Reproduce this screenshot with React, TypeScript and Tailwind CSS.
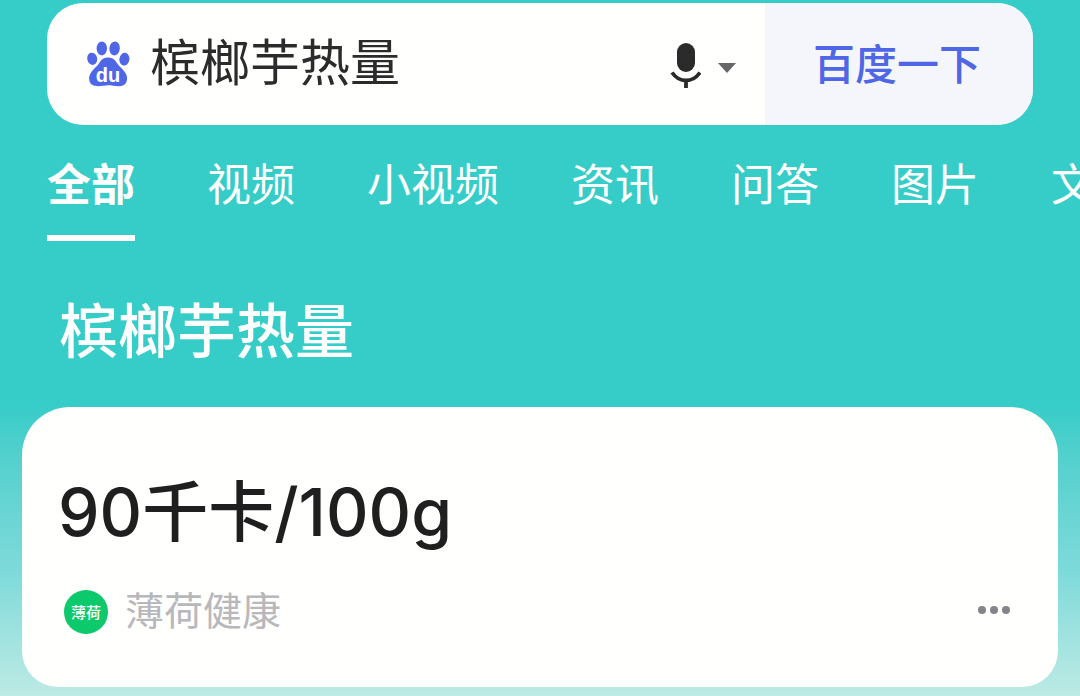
import { useState } from 'react';

const TABS = ['全部', '视频', '小视频', '资讯', '问答', '图片', '文库'];

const PawLogo = () => (
  <svg viewBox="0 0 44 46" className="w-11 h-[46px] shrink-0" role="img" aria-label="百度">
    <g fill="#4f67e6">
      <ellipse cx="6.200" cy="17.800" rx="5" ry="6.200" transform="rotate(-12 6.200 17.800)" />
      <ellipse cx="15.800" cy="7.400" rx="5.200" ry="7" />
      <ellipse cx="28.600" cy="7.400" rx="5.200" ry="7" transform="rotate(6 28.600 7.400)" />
      <ellipse cx="38.400" cy="18.200" rx="5" ry="6.400" transform="rotate(8 38.400 18.200)" />
      <path d="M22 16.500c4 0 6.600 1.800 8.600 5 2.200 3.500 5 5.500 7.800 9 2.600 3.200 3.400 6.500 2.200 10-1.200 3.600-4.400 4.900-8.400 4.700-3.500-.2-6.700-.9-10.200-.9s-6.500.9-10 .9c-4 0-7.400-1.300-8.500-4.900-1-3.500-.1-6.700 2.300-9.800 2.800-3.500 5.600-5.500 7.800-9 2-3.200 4.400-5 8.400-5z" />
    </g>
    <text
      x="22"
      y="41"
      textAnchor="middle"
      fill="#ffffff"
      className="font-['Liberation_Sans',sans-serif] text-[20px] font-bold"
    >
      du
    </text>
  </svg>
);

const MicIcon = () => (
  <svg viewBox="0 0 32 46" className="w-8 h-[46px]" aria-hidden="true">
    <rect x="8" y="1" width="18" height="29" rx="9" fill="#2b2b2b" />
    <path d="M3 30.500C6.500 35.500 11 38.500 17 38.500S27.500 35.500 31 30.500M17 38.500V46" fill="none" stroke="#2b2b2b" strokeWidth="3.800" />
  </svg>
);

const SearchBar = () => {
  const [query, setQuery] = useState('槟榔芋热量');

  return (
    <form
      onSubmit={(e) => e.preventDefault()}
      className="mx-[47px] flex h-[122px] overflow-hidden rounded-[36px] bg-[#fffffd]"
    >
      <div className="flex min-w-0 flex-1 items-center pl-[39px] pr-7">
        <PawLogo />
        <input
          type="text"
          aria-label="搜索"
          value={query}
          onChange={(e) => setQuery(e.target.value)}
          className="ml-5 h-[72px] min-w-0 flex-1 bg-transparent text-[50px] leading-[72px] text-[#2b2b2b] outline-none"
        />
        <button type="button" aria-label="语音搜索" className="pt-0.5">
          <MicIcon />
        </button>
        <button type="button" aria-label="更多搜索方式" className="ml-4 pt-2">
          <svg viewBox="0 0 20 10" className="h-[10px] w-5" aria-hidden="true">
            <path d="M1 0h18l-9 10z" fill="#666666" />
          </svg>
        </button>
      </div>
      <button type="submit" className="w-[268px] bg-[#f5f6fb] pt-0.5 pr-1 text-[42px] font-medium text-[#4f67e6]">
        百度一下
      </button>
    </form>
  );
};

const TabBar = () => {
  const [active, setActive] = useState(TABS[0]);

  return (
    <nav className="mt-7 flex gap-[72px] overflow-hidden pl-[47px]">
      {TABS.map((tab) => (
        <button
          key={tab}
          type="button"
          onClick={() => setActive(tab)}
          className={`shrink-0 border-b-6 pb-4 text-[44px] leading-[66px] text-white ${
            active === tab ? 'border-white font-bold' : 'border-transparent font-normal'
          }`}
        >
          {tab}
        </button>
      ))}
    </nav>
  );
};

const AnswerCard = () => (
  <section className="mx-[22px] mt-8 rounded-t-[48px] rounded-b-[36px] bg-[#fffffe] px-9 pt-[60px] pb-[52px]">
    <p className="font-[Inter,'Noto_Sans_CJK_SC',sans-serif] text-[66px] leading-[90px] font-medium text-[#1f1f1f]">
      90千卡/100g
    </p>
    <div className="mt-8 flex items-center justify-between pr-3">
      <a href="#source" className="flex items-center gap-[17px] pl-1.5">
        <span className="flex size-11 items-center justify-center rounded-full bg-[#0cc96b] text-[15px] leading-none font-medium text-white">
          薄荷
        </span>
        <span className="text-[39px] leading-[46px] text-[#b8b8bc]">薄荷健康</span>
      </a>
      <button type="button" aria-label="更多" className="flex gap-1 pb-1">
        <span className="size-2 rounded-full bg-[#858589]" />
        <span className="size-2 rounded-full bg-[#858589]" />
        <span className="size-2 rounded-full bg-[#858589]" />
      </button>
    </div>
  </section>
);

export default function App() {
  return (
    <main className="min-h-screen bg-linear-to-b from-[#36ccc8] from-58% via-[#7ddada] via-82% to-[#bceae4] pt-[3px] pb-[9px] font-['Liberation_Sans','Noto_Sans_CJK_SC',sans-serif]">
      <SearchBar />
      <TabBar />
      <h1 className="mt-[50px] px-[59px] text-[59px] leading-[84px] font-medium text-white">槟榔芋热量</h1>
      <AnswerCard />
    </main>
  );
}
